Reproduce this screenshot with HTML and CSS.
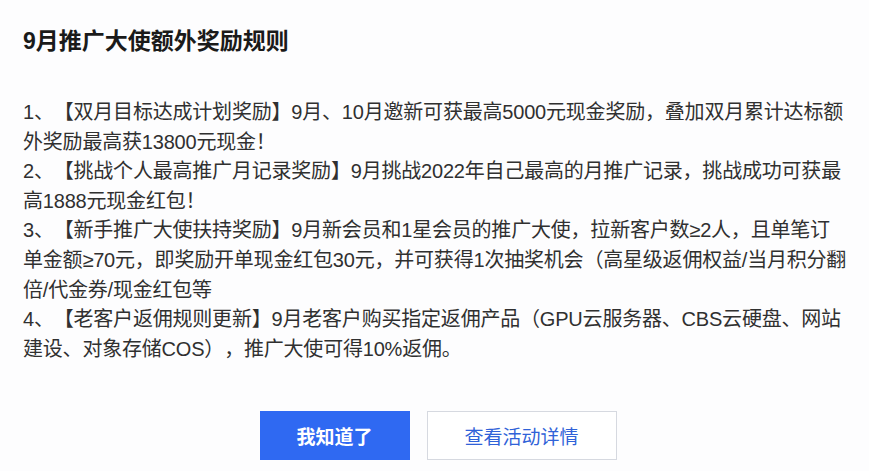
FILE: index.html
```html
<!DOCTYPE html>
<html lang="zh-CN">
<head>
<meta charset="utf-8">
<link rel="stylesheet" href="styles.css">
</head>
<body>
<div class="dialog">
  <h1 class="title">9月推广大使额外奖励规则</h1>
  <div class="content">
    <p>1、【双月目标达成计划奖励】9月、10月邀新可获最高5000元现金奖励，叠加双月累计达标额<br>外奖励最高获13800元现金！</p>
    <p>2、【挑战个人最高推广月记录奖励】9月挑战2022年自己最高的月推广记录，挑战成功可获最<br>高1888元现金红包！</p>
    <p>3、【新手推广大使扶持奖励】9月新会员和1星会员的推广大使，拉新客户数≥2人，且单笔订<br>单金额≥70元，即奖励开单现金红包30元，并可获得1次抽奖机会（高星级返佣权益/当月积分翻<br>倍/代金券/现金红包等</p>
    <p>4、【老客户返佣规则更新】9月老客户购买指定返佣产品（GPU云服务器、CBS云硬盘、网站<br>建设、对象存储COS），推广大使可得10%返佣。</p>
  </div>
  <div class="actions">
    <button class="btn btn-primary">我知道了</button>
    <button class="btn btn-default">查看活动详情</button>
  </div>
</div>
</body>
</html>
```
FILE: styles.css
```css
html, body {
  margin: 0;
  padding: 0;
  background: #fdfdfe;
}
body {
  font-family: "Liberation Sans", "Noto Sans CJK SC", sans-serif;
  color: #303030;
}
.dialog {
  width: 869px;
  height: 471px;
  box-sizing: border-box;
  padding: 27px 0 0 23px;
  overflow: hidden;
}
.title {
  margin: 0;
  font-size: 23px;
  line-height: 28px;
  font-weight: 700;
  color: #1a1a1a;
}
.content {
  margin-top: 43px;
  font-size: 20px;
  letter-spacing: -0.2px;
  line-height: 29.6px;
  white-space: nowrap;
  text-spacing-trim: space-all;
}
.content p {
  margin: 0;
}
.actions {
  display: flex;
  justify-content: center;
  gap: 17px;
  margin-top: 47px;
  padding-right: 16px;
}
.btn {
  height: 49px;
  font-family: inherit;
  font-size: 19px;
  border-radius: 0;
  cursor: pointer;
  padding: 0;
}
.btn-primary {
  width: 150px;
  background: #2f69f2;
  border: none;
  color: #ffffff;
  font-weight: 700;
}
.btn-default {
  width: 190px;
  background: #ffffff;
  border: 1px solid #d6d9e0;
  color: #2f62d8;
}
```
